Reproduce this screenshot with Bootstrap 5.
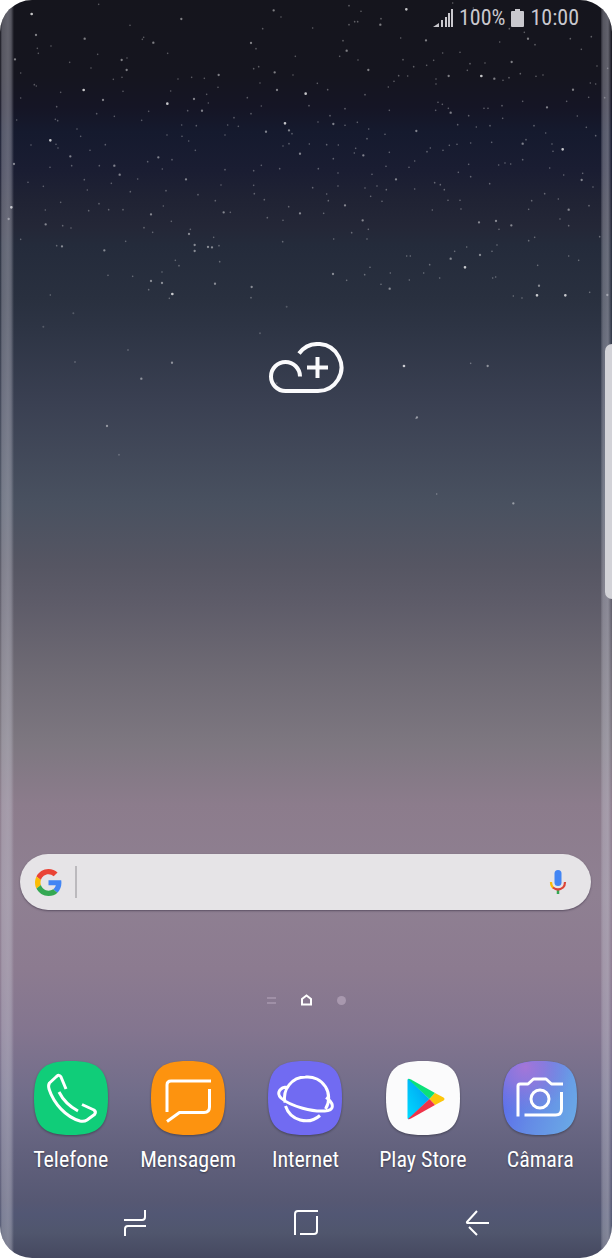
<!DOCTYPE html>
<html lang="pt">
<head>
<meta charset="utf-8">
<meta name="viewport" content="width=device-width, initial-scale=1">
<title>Ecrã inicial</title>
<link href="https://cdn.jsdelivr.net/npm/bootstrap@5.3.0/dist/css/bootstrap.min.css" rel="stylesheet">
<style>
body{background:#fff;font-family:"Roboto Condensed","Liberation Sans Narrow",Roboto,sans-serif}
.phone{border-radius:32px;background:linear-gradient(#15151d 0%,#15151f 6%,#151525 8.5%,#151a2e 10.5%,#1a1d32 13.5%,#202334 16%,#242737 18%,#242b3b 19.5%,#29303f 23.7%,#2d3444 26%,#3a4052 32%,#495160 40%,#565663 45%,#5e5c69 48%,#6d6973 53%,#7d7780 59%,#8c7c8c 64%,#8f8092 71%,#8c7b90 77%,#83758f 82%,#716d8a 87%,#62617d 91.5%,#565873 95.5%,#525774 96.5%,#50566d 98%,#454860 100%)}
.phone::before,.phone::after{content:"";position:absolute;top:0;bottom:0;z-index:1;pointer-events:none}
.phone::before{left:0;width:14px;background:linear-gradient(90deg,#c8c8d400,#c8c8d45c 2px,#c8c8d46e 8px,#c8c8d45c 11px,#c8c8d400 14px)}
.phone::after{right:0;width:11px;background:linear-gradient(90deg,#c8c8d420,#c8c8d45c 2px,#c8c8d46e 7px,#c8c8d400 11px)}
.wall{inset:0;width:100%;height:100%}
.wall path{fill:none;stroke:#fff;stroke-linecap:round}
.edge-handle{right:0;top:344px;width:7px;height:255px;border-radius:9px 0 0 9px;background:#d2d2d7;z-index:2}
.status{height:36px;padding:0 33px 0 0;gap:6px;font-size:22px;line-height:38px;color:#c9c8ce}
.above{flex:2 1 0}
.below{flex:3 1 0}
.plain{background:none;border:0;padding:0;line-height:0}
.search{margin:0 21px 0 20px;height:56px;border-radius:28px;background:#e6e4e7;box-shadow:0 1px 2px #3a304499;padding:0 24px 0 15px}
.search input{border:0;border-left:2px solid #bbb9bd;background:none;height:32px;outline:0;font-size:20px;margin-left:13px}
.pages{height:24px;margin-top:78px;gap:24px}
.dock{padding:0 13px 0 12px;margin-top:49px}
.app{color:#fff;text-decoration:none;font-size:22px;line-height:28px;text-shadow:0 1px 2px #0006}
.app svg{filter:drop-shadow(0 1px 1px #0005);margin-bottom:11px}
.line{fill:none;stroke:#fff;stroke-width:3;stroke-linecap:round;stroke-linejoin:round}
.butt{stroke-linecap:butt}
.keys{padding:0 49px;margin-top:35px;height:49px}
.keys .line{stroke-width:2}
</style>
<script src="https://cdn.jsdelivr.net/npm/bootstrap@5.3.0/dist/js/bootstrap.bundle.min.js"></script>
</head>
<body>
<main class="phone position-relative overflow-hidden min-vh-100 d-flex flex-column">
  <svg class="wall position-absolute" viewBox="0 0 1836 3774" preserveAspectRatio="xMidYMin slice" aria-hidden="true">
    <!-- bright stars -->
    <path stroke-width="8" opacity=".75" d="M151 421h0M34 622h0M517 882h0M502 311h0M251 270h0M855 370h0M95 42h0M1395 802h0M1688 448h0M1696 886h0M1444 228h0M1219 28h0M917 281h0M1611 886h0M1212 1098h0"/>
    <!-- medium stars -->
    <path stroke-width="7" opacity=".45" d="M45 178h0M108 105h0M309 300h0M821 31h0M544 57h0M254 116h0M365 180h0M380 210h0M460 128h0M606 332h0M582 297h0M475 472h0M343 497h0M359 524h0M42 492h0M26 657h0M211 469h0M567 702h0M584 735h0M624 741h0M636 742h0M584 753h0M453 843h0M486 849h0M645 851h0M755 861h0M671 637h0M453 643h0M558 538h0M313 751h0M186 739h0M798 395h0M867 391h0M900 461h0M900 640h0M753 129h0M656 225h0M824 217h0M831 270h0M137 673h0M1040 152h0M1105 210h0M1278 121h0M1352 338h0M1249 393h0M1090 466h0M1188 538h0M1035 616h0M1088 661h0M1169 866h0M1437 667h0M1488 663h0M1534 676h0M1568 431h0M1719 269h0M1535 186h0M1584 116h0M1483 236h0M1346 228h0M1000 372h0M1352 776h0M1641 322h0M1706 629h0M1141 74h0M1745 540h0M1617 857h0M1440 765h0M999 822h0M1822 885h0M516 1088h0M321 1278h0M424 1136h0M1251 1252h0M1540 1510h0M1463 1098h0"/>
    <!-- faint stars -->
    <path stroke-width="5" opacity=".3" d="M153 138h0M112 145h0M115 160h0M209 187h0M273 204h0M293 163h0M62 219h0M103 254h0M109 258h0M62 294h0M182 277h0M170 320h0M166 358h0M50 360h0M93 435h0M173 362h0M231 387h0M242 409h0M290 341h0M343 349h0M369 274h0M340 238h0M366 232h0M381 174h0M431 112h0M427 118h0M503 160h0M534 237h0M575 232h0M613 235h0M654 262h0M620 283h0M625 309h0M512 273h0M446 334h0M425 361h0M545 375h0M589 377h0M546 409h0M566 423h0M501 405h0M563 332h0M702 353h0M683 375h0M715 379h0M675 405h0M753 341h0M784 318h0M742 293h0M780 249h0M761 206h0M776 200h0M768 146h0M788 86h0M843 51h0M886 169h0M879 225h0M876 401h0M849 438h0M867 431h0M784 496h0M761 512h0M839 506h0M675 509h0M761 556h0M763 581h0M793 599h0M866 620h0M849 661h0M848 725h0M802 653h0M691 637h0M663 555h0M646 602h0M594 584h0M586 451h0M516 479h0M487 507h0M443 485h0M298 497h0M215 497h0M150 502h0M174 444h0M168 433h0M253 539h0M262 570h0M334 550h0M413 537h0M391 575h0M498 572h0M490 618h0M514 664h0M432 683h0M458 697h0M369 629h0M326 629h0M266 632h0M297 611h0M182 607h0M130 559h0M84 547h0M136 630h0M188 677h0M213 684h0M170 737h0M377 724h0M571 688h0M641 712h0M657 737h0M526 781h0M537 797h0M486 816h0M659 785h0M398 829h0M324 826h0M446 869h0M508 895h0M151 885h0M753 893h0M316 434h0M270 451h0M62 718h0M390 76h0M296 13h0"/>
    <path transform="translate(918)" stroke-width="5" opacity=".32" d="M165 34h0M129 17h0M129 74h0M146 65h0M155 65h0M225 56h0M20 84h0M111 122h0M156 180h0M101 169h0M284 114h0M291 179h0M323 200h0M362 196h0M383 181h0M410 159h0M462 157h0M492 191h0M537 189h0M484 211h0M591 241h0M609 233h0M643 221h0M690 229h0M711 225h0M581 126h0M610 86h0M655 97h0M687 134h0M793 116h0M826 148h0M856 110h0M873 198h0M905 205h0M853 249h0M869 252h0M896 293h0M848 292h0M782 304h0M814 348h0M869 407h0M841 382h0M719 399h0M684 377h0M650 304h0M650 479h0M660 419h0M738 432h0M741 454h0M731 504h0M773 525h0M830 520h0M861 561h0M849 617h0M757 597h0M762 657h0M788 677h0M716 581h0M677 602h0M668 628h0M686 712h0M668 722h0M579 688h0M573 735h0M558 754h0M569 831h0M560 834h0M446 754h0M482 741h0M371 794h0M353 819h0M401 834h0M302 768h0M313 768h0M253 819h0M192 802h0M176 824h0M122 841h0M83 717h0M183 717h0M187 688h0M137 698h0M53 640h0M67 602h0M62 582h0M20 563h0M96 558h0M96 519h0M198 523h0M177 564h0M213 558h0M241 569h0M194 589h0M228 604h0M326 567h0M386 548h0M403 554h0M415 569h0M426 601h0M462 601h0M465 627h0M457 517h0M488 493h0M494 530h0M551 551h0M578 495h0M597 489h0M614 492h0M326 483h0M309 502h0M250 457h0M240 499h0M145 459h0M149 445h0M82 476h0M37 506h0M62 434h0M97 435h0M10 432h0M36 366h0M72 347h0M117 376h0M154 367h0M188 387h0M183 416h0M237 403h0M250 331h0M177 284h0M247 261h0M264 244h0M278 227h0M305 228h0M390 237h0M390 252h0M396 307h0M409 313h0M389 331h0M427 325h0M488 347h0M455 374h0M511 381h0M552 377h0M494 429h0M557 427h0M453 433h0M430 436h0M411 451h0M373 444h0M363 455h0M534 325h0M546 325h0M588 317h0M590 355h0M9 317h0M65 269h0M34 250h0M117 326h0M440 9h0M502 24h0M225 853h0M310 840h0M788 768h0M818 781h0M695 796h0M648 894h0M622 888h0M851 877h0M881 710h0M379 630h0M494 1090h0M392 1482h0M330 1255h0"/>
    <path stroke-width="6" opacity=".2" d="M384 1050h0M225 1086h0M357 1364h0M130 980h0M780 1000h0M830 1150h0M860 920h0M220 940h0"/>
  </svg>
  <div class="edge-handle position-absolute"></div>

  <header class="status position-relative d-flex justify-content-end align-items-center">
    <svg width="20" height="18" viewBox="0 0 20 18" fill="#c9c8ce" aria-hidden="true"><path d="M0 18L6 14V18zM8 11h2v7H8zM12 8h2v10h-2zM15 4h2v14h-2zM18 0h2v18h-2z"/></svg>
    <span>100%</span>
    <svg width="13" height="18" viewBox="0 0 13 18" fill="#c9c8ce" aria-hidden="true"><path d="M4 0h5v2h3q1 0 1 1v14q0 1-1 1H1q-1 0-1-1V3q0-1 1-1h3z"/></svg>
    <time>10:00</time>
  </header>

  <div class="above"></div>
  <div class="position-relative text-center">
    <button class="plain" type="button" aria-label="Adicionar nuvem">
      <svg width="76" height="52" viewBox="0 0 76 52" fill="none" stroke="#fafafc" stroke-width="4"><path d="M32 34.500A14.500 14.500 0 1 0 17.500 49H50A23.500 23.500 0 1 0 31 11.500M49.500 15v21M39 25.500h21"/></svg>
    </button>
  </div>
  <div class="below"></div>

  <form class="search position-relative d-flex align-items-center" role="search">
    <svg width="27" height="27" viewBox="0 0 48 48" aria-hidden="true"><path fill="#ea4335" d="M24 9.500c3.540 0 6.710 1.220 9.210 3.600l6.850-6.850C35.900 2.380 30.470 0 24 0 14.620 0 6.510 5.380 2.560 13.220l7.980 6.190C12.430 13.720 17.740 9.500 24 9.500z"/><path fill="#4285f4" d="M46.980 24.550c0-1.570-.15-3.090-.38-4.550H24v9.020h12.940c-.58 2.960-2.260 5.480-4.780 7.180l7.730 6c4.510-4.180 7.090-10.360 7.090-17.650z"/><path fill="#fbbc05" d="M10.530 28.590c-.48-1.450-.76-2.990-.76-4.590s.27-3.140.76-4.590l-7.980-6.190C.92 16.460 0 20.120 0 24s.92 7.540 2.560 10.780z"/><path fill="#34a853" d="M24 48c6.480 0 11.930-2.130 15.890-5.810l-7.730-6c-2.150 1.450-4.920 2.300-8.160 2.300-6.260 0-11.570-4.220-13.470-9.910l-7.980 6.190C6.510 42.620 14.620 48 24 48z"/></svg>
    <input class="flex-grow-1" type="text" aria-label="Pesquisar">
    <button class="plain" type="button" aria-label="Pesquisa por voz">
      <svg width="18" height="26" viewBox="0 0 18 26"><path fill="none" stroke="#34a853" stroke-width="2.500" d="M9 20v5"/><path fill="none" stroke="#fbbc05" stroke-width="2.200" d="M2 13q0 4 2.500 6"/><path fill="none" stroke="#db4437" stroke-width="2.200" d="M4 18.500q5 4 10 0q2-2 2-5.500"/><rect x="5.500" y="1" width="7" height="16" rx="3.500" fill="#4285f4"/></svg>
    </button>
  </form>

  <nav class="pages position-relative d-flex justify-content-center align-items-center" aria-label="Páginas">
    <svg width="11" height="11" viewBox="0 0 11 11" fill="none" stroke="#a898ae" stroke-width="1.500"><path d="M1 3h9M1 8h9"/></svg>
    <svg width="11" height="12" viewBox="0 0 11 12" fill="none" stroke="#fff" stroke-width="2"><path d="M1 10.500V5L5.500 1.500L10 5v5.500z"/></svg>
    <svg width="11" height="11" viewBox="0 0 11 11"><circle cx="5.500" cy="5.500" r="4.500" fill="#a898ae"/></svg>
  </nav>

  <div class="dock position-relative">
    <div class="row row-cols-5 g-0 text-center">
      <a class="col app" href="#telefone">
        <svg width="74" height="74" viewBox="0 0 74 74" aria-hidden="true"><path fill="#10cd79" d="M37 0C65 0 74 9 74 37S65 74 37 74 0 65 0 37 9 0 37 0z"/><path class="line butt" d="M32 28L27 16Q25.500 13 22.500 15.500L15.500 22Q14 24 15 28C20 43 32 56 46 60Q50 61 53 59L60.500 53.500Q62.500 51 60 49L48 43.500M25 31Q31 43 44 50"/></svg>
        <span class="d-block">Telefone</span>
      </a>
      <a class="col app" href="#mensagem">
        <svg width="74" height="74" viewBox="0 0 74 74" aria-hidden="true"><path fill="#fd930f" d="M37 0C65 0 74 9 74 37S65 74 37 74 0 65 0 37 9 0 37 0z"/><path class="line butt" d="M16 51V24Q16 20 20 20H60M58.500 28V46Q58.500 51.500 53 51.500H28.500L16 60.500"/></svg>
        <span class="d-block">Mensagem</span>
      </a>
      <a class="col app" href="#internet">
        <svg width="74" height="74" viewBox="0 0 74 74" aria-hidden="true"><path fill="#716bf2" d="M37 0C65 0 74 9 74 37S65 74 37 74 0 65 0 37 9 0 37 0z"/><path class="line butt" d="M17 41.500A21 21 0 0 1 37.500 16A21 21 0 0 1 57.500 48M19.500 26C12 26 8 32 13 37C22 45 46 52 60 49.500C67 48 65 41 58 36.500M17.500 45A21.500 21.500 0 0 0 52 54.500"/></svg>
        <span class="d-block">Internet</span>
      </a>
      <a class="col app" href="#play-store">
        <svg width="74" height="74" viewBox="0 0 74 74" aria-hidden="true"><defs><linearGradient id="pb" x1="1" y1="0" x2="0" y2="1"><stop stop-color="#0098f0"/><stop offset="1" stop-color="#00dcff"/></linearGradient></defs><path fill="#fbfbfc" d="M37 0C65 0 74 9 74 37S65 74 37 74 0 65 0 37 9 0 37 0z"/><path fill="url(#pb)" d="M21.500 19Q21.500 17.500 23 18L43.500 38L23 58Q21.500 58.500 21.500 57z"/><path fill="#0be07a" d="M22 18Q23 17.500 25 18.500L49 32L43.500 38z"/><path fill="#fdc60b" d="M49 32L57.500 36.500Q59.500 38 57.500 39.500L49 44L43.500 38z"/><path fill="#ef3349" d="M43.500 38L49 44L25 57.500Q23 58.500 22 58z"/></svg>
        <span class="d-block">Play Store</span>
      </a>
      <a class="col app" href="#camara">
        <svg width="74" height="74" viewBox="0 0 74 74" aria-hidden="true"><defs><linearGradient id="cb" x1="0" y1=".5" x2="1" y2=".8"><stop stop-color="#5c6eea"/><stop offset=".4" stop-color="#648ae6"/><stop offset="1" stop-color="#6aaae6"/></linearGradient><radialGradient id="cp" cx=".3" cy=".08" r=".65"><stop stop-color="#a476d8"/><stop offset=".4" stop-color="#9278dc" stop-opacity=".8"/><stop offset="1" stop-color="#7a7ce0" stop-opacity="0"/></radialGradient></defs><path fill="url(#cb)" d="M37 0C65 0 74 9 74 37S65 74 37 74 0 65 0 37 9 0 37 0z"/><path fill="url(#cp)" d="M37 0C65 0 74 9 74 37S65 74 37 74 0 65 0 37 9 0 37 0z"/><path class="line butt" d="M15 55.500V25Q15 23 17 23H25L30.500 18H43L48.500 23H60M58.500 31V48Q58.500 54 52.500 54H21.500"/><circle class="line" cx="37" cy="38" r="9"/></svg>
        <span class="d-block">Câmara</span>
      </a>
    </div>
  </div>

  <nav class="keys position-relative" aria-label="Navegação">
    <div class="row row-cols-3 g-0 text-center">
      <div class="col"><button class="plain" type="button" aria-label="Recentes"><svg width="24" height="28" viewBox="0 0 24 28"><path class="line butt" d="M1 11H19Q22 11 22 8V1M23 17H5Q2 17 2 20V27"/></svg></button></div>
      <div class="col"><button class="plain" type="button" aria-label="Início"><svg width="26" height="28" viewBox="0 0 26 28"><path class="line butt" d="M2 26V5Q2 2 5 2H25M24 7V22Q24 25 21 25H7"/></svg></button></div>
      <div class="col"><button class="plain" type="button" aria-label="Voltar"><svg width="24" height="28" viewBox="0 0 24 28"><path class="line butt" d="M12 2L2 13Q1.500 14 3 14H24M4 18L12 26"/></svg></button></div>
    </div>
  </nav>
</main>
</body>
</html>
